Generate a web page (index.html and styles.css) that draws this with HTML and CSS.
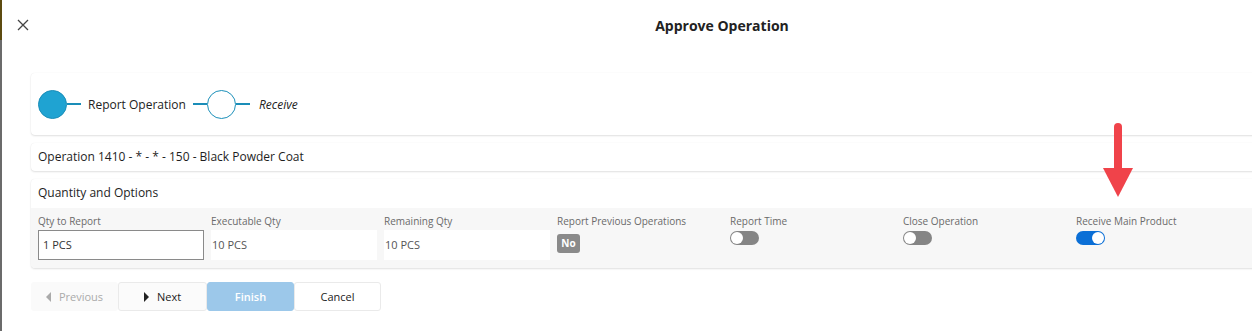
FILE: index.html
```html
<!DOCTYPE html>
<html lang="en">
<head>
    <meta charset="UTF-8">
    <title>Approve Operation</title>
    <link rel="stylesheet" href="styles.css">
</head>
<body>
    <div class="page">
        <div class="dialog">
            <div class="dialog-header">
                <span class="close-btn">
                    <svg width="12" height="12" viewBox="0 0 12 12"><path d="M1 1 L11 11 M11 1 L1 11" stroke="#444" stroke-width="1.3" fill="none"/></svg>
                </span>
                <h1 class="dialog-title">Approve Operation</h1>
            </div>

            <div class="card stepper">
                <div class="step done">
                    <span class="step-circle"></span>
                    <span class="step-line"></span>
                    <span class="step-label">Report Operation</span>
                </div>
                <div class="step">
                    <span class="step-line"></span>
                    <span class="step-circle"></span>
                    <span class="step-line"></span>
                    <span class="step-label">Receive</span>
                </div>
            </div>

            <div class="card op-title">Operation 1410 - * - * - 150 - Black Powder Coat</div>

            <div class="card options">
                <div class="options-head">Quantity and Options</div>
                <div class="options-grid">
                    <div class="field">
                        <label>Qty to Report</label>
                        <div class="input editable">1 PCS</div>
                    </div>
                    <div class="field">
                        <label>Executable Qty</label>
                        <div class="input">10 PCS</div>
                    </div>
                    <div class="field">
                        <label>Remaining Qty</label>
                        <div class="input">10 PCS</div>
                    </div>
                    <div class="field">
                        <label>Report Previous Operations</label>
                        <span class="badge-no">No</span>
                    </div>
                    <div class="field">
                        <label>Report Time</label>
                        <span class="toggle"></span>
                    </div>
                    <div class="field">
                        <label>Close Operation</label>
                        <span class="toggle"></span>
                    </div>
                    <div class="field">
                        <label>Receive Main Product</label>
                        <span class="toggle on"></span>
                    </div>
                </div>
                <svg class="arrow" width="32" height="76" viewBox="0 0 32 76">
                    <path d="M16 4 L16 48" stroke="#f0434a" stroke-width="8" stroke-linecap="round"/>
                    <path d="M1 45 L31 45 L16 74 Z" fill="#f0434a"/>
                </svg>
            </div>

            <div class="actions">
                <button class="btn btn-prev"><span class="tri-left"></span>Previous</button>
                <button class="btn btn-next"><span class="tri-right"></span>Next</button>
                <button class="btn btn-finish">Finish</button>
                <button class="btn btn-cancel">Cancel</button>
            </div>
        </div>
    </div>
</body>
</html>
```

FILE: styles.css
```css
html, body {
    margin: 0;
    padding: 0;
    overflow: hidden;
    background: #fff;
}

body {
    font-family: "Open Sans", Arial, sans-serif;
    color: #333;
}

.page {
    height: 331px;
    padding-left: 2px;
    background:
        linear-gradient(#5d4b10, #5d4b10) 0 0 / 2px 40px no-repeat,
        linear-gradient(#6b6b6b, #6b6b6b) 0 40px / 2px 100% no-repeat,
        #fff;
}

.dialog {
    width: 1440px;
    padding-left: 29px;
    box-sizing: border-box;
}

.dialog-header {
    display: flex;
    align-items: center;
    height: 50px;
    margin-left: -29px;
    margin-bottom: 23px;
    position: relative;
}

.close-btn {
    display: flex;
    margin-left: 15px;
}

.dialog-title {
    position: absolute;
    left: 0;
    right: 0;
    margin: 0;
    text-align: center;
    font-size: 14px;
    font-weight: 700;
    color: #222;
    pointer-events: none;
}

.card {
    background: #fff;
    border-radius: 4px;
    box-shadow: 0 1px 2px rgba(0, 0, 0, 0.12), 0 0 1px rgba(0, 0, 0, 0.08);
    margin-bottom: 8px;
}

/* stepper */
.stepper {
    height: 62px;
    display: flex;
    align-items: center;
    padding-left: 7px;
}

.step {
    display: flex;
    align-items: center;
}

.step-circle {
    width: 27px;
    height: 27px;
    border-radius: 50%;
    border: 1px solid #1b8fb9;
    background: #fff;
}

.step.done .step-circle {
    background: #1fa3d2;
    border-color: #1a8db8;
}

.step-line {
    width: 14px;
    height: 2px;
    background: #1a8db8;
}

.step-label {
    font-size: 12px;
    color: #222;
    margin: 0 7px 0 7px;
}

.step:not(.done) .step-label {
    font-style: italic;
    margin-left: 9px;
}

.op-title {
    height: 28px;
    line-height: 28px;
    padding-left: 7px;
    font-size: 12px;
    color: #1e1e1e;
}

/* options */
.options {
    position: relative;
}

.options-head {
    height: 29px;
    line-height: 27px;
    padding-left: 7px;
    font-size: 12px;
    color: #1e1e1e;
}

.options-grid {
    background: #f7f7f7;
    height: 60px;
    padding: 7px 0 0 7px;
    box-sizing: border-box;
    display: grid;
    grid-template-columns: repeat(7, 173px);
    border-radius: 0 0 4px 4px;
}

.field label {
    display: block;
    font-size: 10px;
    color: #6a6a6a;
    height: 15px;
    line-height: 13px;
}

.input {
    width: 166px;
    height: 30px;
    box-sizing: border-box;
    background: #fff;
    font-size: 11px;
    color: #555;
    line-height: 30px;
    padding-left: 1px;
}

.input.editable {
    border: 1px solid #8a8a8a;
    line-height: 28px;
    padding-left: 4px;
    color: #333;
}

.badge-no {
    display: inline-block;
    margin-top: 2px;
    width: 23px;
    height: 19px;
    line-height: 19px;
    text-align: center;
    border-radius: 3px;
    background: #8a8a8a;
    color: #fff;
    font-size: 10px;
    font-weight: 700;
}

.toggle {
    display: block;
    position: relative;
    width: 29px;
    height: 14px;
    border-radius: 7px;
    background: #858585;
    margin-top: 1px;
}

.toggle::after {
    content: "";
    position: absolute;
    top: 1px;
    left: 1px;
    width: 12px;
    height: 12px;
    border-radius: 50%;
    background: #fff;
}

.toggle.on {
    background: #0b6fd6;
}

.toggle.on::after {
    left: auto;
    right: 1px;
}

.arrow {
    position: absolute;
    left: 1071px;
    top: -56px;
}

/* buttons */
.actions {
    display: flex;
    margin-top: 14px;
}

.btn {
    height: 29px;
    width: 87px;
    border: 1px solid #eaeaea;
    border-radius: 3px;
    background: #fff;
    font-family: "Open Sans", Arial, sans-serif;
    font-size: 11px;
    color: #222;
    display: flex;
    align-items: center;
    justify-content: center;
    padding: 0;
}

.btn-prev {
    border-color: transparent;
    background: #fafafa;
    color: #aaa;
}

.btn-next {
    width: 89px;
    background: #fbfbfb;
}

.btn-finish {
    background: #9cc8ea;
    border-color: #9cc8ea;
    color: #fff;
    font-weight: 600;
}

.tri-left,
.tri-right {
    width: 0;
    height: 0;
    border-top: 5px solid transparent;
    border-bottom: 5px solid transparent;
    margin-right: 8px;
}

.tri-left {
    border-right: 5px solid #aaa;
}

.tri-right {
    border-left: 5px solid #222;
}
```
